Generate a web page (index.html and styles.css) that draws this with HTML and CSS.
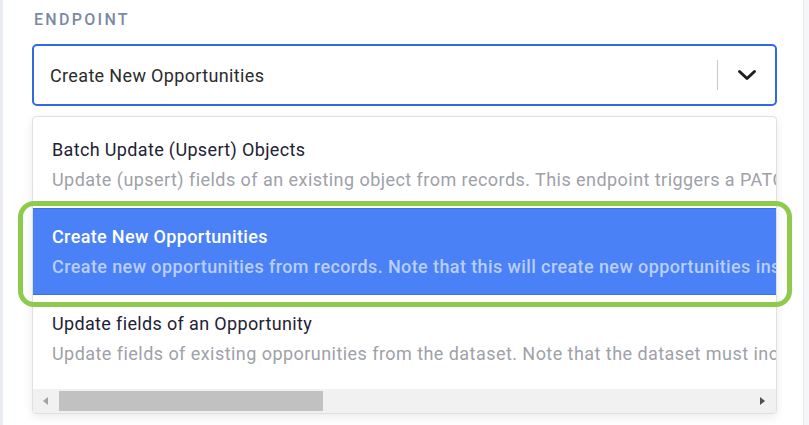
FILE: index.html
```html
<!DOCTYPE html>
<html lang="en">
<head>
<meta charset="utf-8">
<title>Endpoint</title>
<link rel="stylesheet" href="styles.css">
</head>
<body>
<div class="page">
  <div class="field">
    <div class="label">ENDPOINT</div>
    <div class="select">
      <span class="value">Create New Opportunities</span>
      <span class="sep"></span>
      <span class="indicator">
        <svg width="20" height="12" viewBox="0 0 20 12"><path d="M2.5 2.5 L10 9.5 L17.5 2.5" fill="none" stroke="#1f1f1f" stroke-width="3" stroke-linecap="round" stroke-linejoin="round"/></svg>
      </span>
    </div>
    <div class="menu">
      <div class="list">
        <div class="option">
          <div class="title">Batch Update (Upsert) Objects</div>
          <div class="desc">Update (upsert) fields of an existing object from records. This endpoint triggers a PATCH request for each record in the dataset.</div>
        </div>
        <div class="option selected">
          <div class="title">Create New Opportunities</div>
          <div class="desc">Create new opportunities from records. Note that this will create new opportunities instead of updating existing ones.</div>
        </div>
        <div class="option">
          <div class="title">Update fields of an Opportunity</div>
          <div class="desc">Update fields of existing opporunities from the dataset. Note that the dataset must include the opportunity Id column.</div>
        </div>
      </div>
      <div class="hscroll">
        <span class="arrow left"></span>
        <span class="thumb"></span>
        <span class="track"></span>
        <span class="arrow right"></span>
      </div>
    </div>
    <div class="highlight"></div>
  </div>
</div>
</body>
</html>
```
FILE: styles.css
```css
html, body {
  margin: 0;
  padding: 0;
  background: #f6f7fa;
}
body {
  font-family: Roboto, "Noto Sans", Arial, sans-serif;
  width: 809px;
  height: 425px;
  overflow: hidden;
}
.page {
  width: 804px;
  height: 425px;
  background: #ffffff;
  border-left: 3px solid #e9ecf6;
  border-right: 1px solid #e4e7ee;
  box-sizing: border-box;
}
.field {
  position: relative;
  padding: 10px 0 0 29px;
  width: 745px;
}
.label {
  font-size: 16px;
  font-weight: 500;
  letter-spacing: 2.3px;
  line-height: 20px;
  color: #7b8aa2;
  padding-left: 2px;
  margin-bottom: 14px;
}
.select {
  height: 62px;
  box-sizing: border-box;
  border: 2px solid #2f6ae4;
  border-radius: 5px;
  display: flex;
  align-items: center;
  padding-left: 16px;
  background: #fff;
}
.value {
  font-size: 18px;
  color: #2b2b2b;
  letter-spacing: 0.35px;
  flex: 1;
  white-space: nowrap;
}
.sep {
  width: 1px;
  height: 30px;
  background: #c9c9c9;
}
.indicator {
  width: 57px;
  display: flex;
  align-items: center;
  justify-content: center;
}
.menu {
  margin-top: 10px;
  height: 298px;
  box-sizing: border-box;
  border: 1px solid #e0e0e0;
  border-radius: 4px;
  box-shadow: 0 3px 10px rgba(0, 0, 0, 0.08);
  background: #fff;
  padding-top: 4px;
  display: flex;
  flex-direction: column;
  overflow: hidden;
}
.list {
  height: 268px;
  overflow: hidden;
}
.option {
  height: 87px;
  box-sizing: border-box;
  padding: 18px 0 0 19px;
  white-space: nowrap;
}
.title {
  font-size: 18px;
  line-height: 22px;
  color: #1e2235;
  letter-spacing: 0.35px;
}
.desc {
  margin-top: 8px;
  font-size: 18px;
  line-height: 22px;
  color: #9ea1a8;
  letter-spacing: 0.45px;
}
.option.selected {
  background: #4a81f6;
  border-top: 1px solid #3f72e4;
  border-bottom: 1px solid #3f72e4;
  padding-top: 17px;
}
.option.selected .title {
  color: #ffffff;
  font-weight: 500;
}
.option.selected .desc {
  color: #b9cefb;
  font-weight: 500;
  letter-spacing: 0.4px;
}
.hscroll {
  height: 24px;
  background: #f1f1f1;
  display: flex;
  align-items: center;
}
.arrow {
  width: 26px;
  height: 24px;
  position: relative;
  flex: none;
}
.arrow::after {
  content: "";
  position: absolute;
  top: 8px;
  width: 0;
  height: 0;
  border-top: 4px solid transparent;
  border-bottom: 4px solid transparent;
}
.arrow.left::after {
  left: 10px;
  border-right: 5px solid #a3a3a3;
}
.arrow.right::after {
  left: 10px;
  border-left: 5px solid #505050;
}
.thumb {
  width: 264px;
  height: 20px;
  background: #c1c1c1;
  flex: none;
}
.track {
  flex: 1;
}
.highlight {
  position: absolute;
  left: 15px;
  top: 201px;
  width: 774px;
  height: 106px;
  box-sizing: border-box;
  border: 5px solid #8ecb4d;
  border-radius: 16px;
  pointer-events: none;
}
```
